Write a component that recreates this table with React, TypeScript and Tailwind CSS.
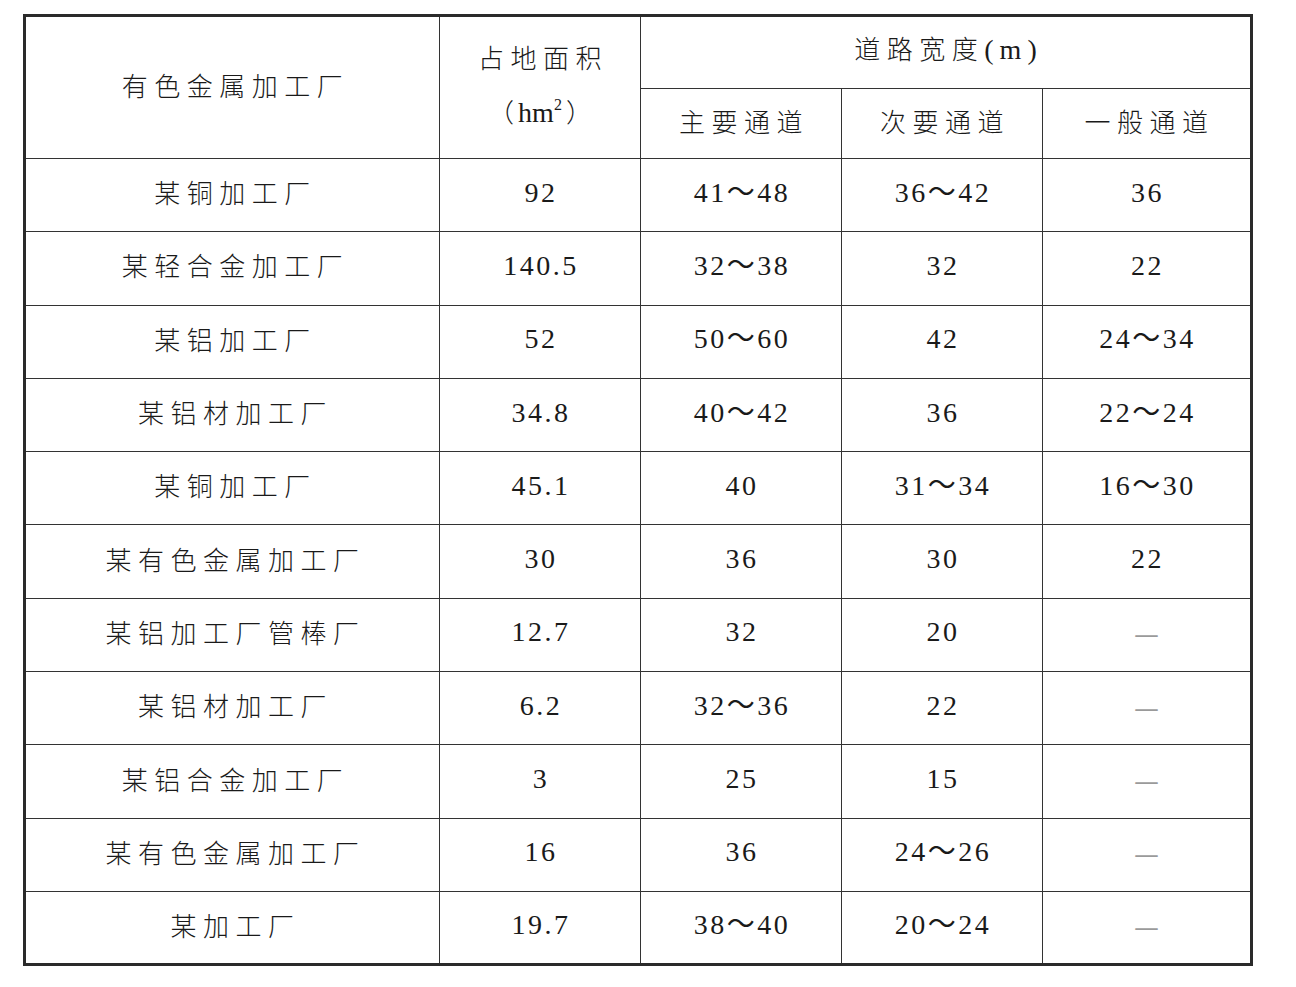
const CJK = "font-['Noto_Sans_CJK_SC',sans-serif]";
const NUM = "font-['Liberation_Serif','Noto_Sans_CJK_SC',serif]";

type Row = [string, string, string, string, string];

const ROWS: Row[] = [
  ["某铜加工厂", "92", "41～48", "36～42", "36"],
  ["某轻合金加工厂", "140.5", "32～38", "32", "22"],
  ["某铝加工厂", "52", "50～60", "42", "24～34"],
  ["某铝材加工厂", "34.8", "40～42", "36", "22～24"],
  ["某铜加工厂", "45.1", "40", "31～34", "16～30"],
  ["某有色金属加工厂", "30", "36", "30", "22"],
  ["某铝加工厂管棒厂", "12.7", "32", "20", "—"],
  ["某铝材加工厂", "6.2", "32～36", "22", "—"],
  ["某铝合金加工厂", "3", "25", "15", "—"],
  ["某有色金属加工厂", "16", "36", "24～26", "—"],
  ["某加工厂", "19.7", "38～40", "20～24", "—"],
];

function Cjk({ children }: { children: React.ReactNode }) {
  return (
    <span className={`${CJK} font-light text-[26px] leading-none tracking-[6.5px] pl-[6px]`}>
      {children}
    </span>
  );
}

function Num({ value }: { value: string }) {
  if (value === "—") {
    return <span className={`${CJK} text-[28px] leading-none text-[#9a9a9a]`}>—</span>;
  }
  return (
    <span className={`${NUM} text-[28px] leading-none tracking-[2.5px] pl-[2px]`}>{value}</span>
  );
}

const cell = "border border-[#333] text-center align-middle p-0 leading-none text-[#1a1a1a]";

export default function App() {
  return (
    <div className="w-[1296px] h-[987px] bg-white pt-[14px] pl-[23px]">
      <table className="border-collapse border-[3px] border-[#2a2a2a] table-fixed w-[1227px]">
        <colgroup>
          <col className="w-[415px]" />
          <col className="w-[201px]" />
          <col className="w-[201px]" />
          <col className="w-[201px]" />
          <col className="w-[209px]" />
        </colgroup>
        <thead>
          <tr className="h-[73px]">
            <th rowSpan={2} className={`${cell} font-normal pb-[6px]`}>
              <Cjk>有色金属加工厂</Cjk>
            </th>
            <th rowSpan={2} className={`${cell} font-normal`}>
              <div className="flex flex-col items-center gap-[28px] pb-[4px]">
                <Cjk>占地面积</Cjk>
                <span className="text-[26px] leading-none">
                  <span className={`${CJK} font-light`}>（</span>
                  <span className={`${NUM} text-[28px] mx-[4px]`}>
                    hm<sup className="text-[16px] relative -top-[12px]">2</sup>
                  </span>
                  <span className={`${CJK} font-light`}>）</span>
                </span>
              </div>
            </th>
            <th colSpan={3} className={`${cell} font-normal pb-[6px]`}>
              <Cjk>道路宽度</Cjk>
              <span className={`${NUM} text-[28px] tracking-[6px]`}>(m)</span>
            </th>
          </tr>
          <tr className="h-[70px]">
            <th className={`${cell} font-normal pb-[6px]`}>
              <Cjk>主要通道</Cjk>
            </th>
            <th className={`${cell} font-normal pb-[6px]`}>
              <Cjk>次要通道</Cjk>
            </th>
            <th className={`${cell} font-normal pb-[6px]`}>
              <Cjk>一般通道</Cjk>
            </th>
          </tr>
        </thead>
        <tbody>
          {ROWS.map((row, i) => (
            <tr key={i} className="h-[73.3px]">
              <td className={`${cell} pb-[6px]`}>
                <Cjk>{row[0]}</Cjk>
              </td>
              {row.slice(1).map((v, j) => (
                <td key={j} className={`${cell} pb-[5px]`}>
                  <Num value={v} />
                </td>
              ))}
            </tr>
          ))}
        </tbody>
      </table>
    </div>
  );
}
